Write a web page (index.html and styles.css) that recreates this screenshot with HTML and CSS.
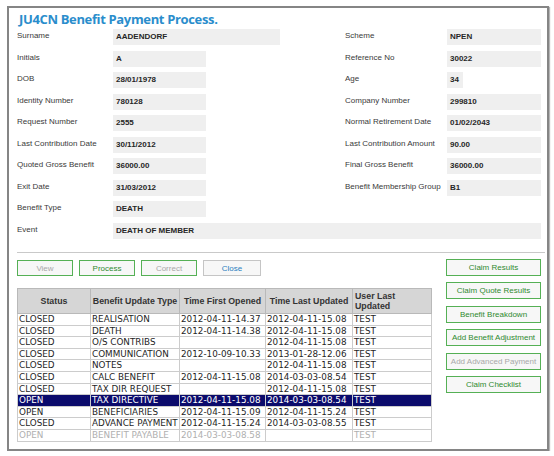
FILE: index.html
```html
<!DOCTYPE html>
<html lang="en">
<head>
    <meta charset="UTF-8">
    <title>Benefit Payment Process</title>
    <link rel="stylesheet" href="styles.css">
</head>
<body>
    <div class="frame">
        <h1 class="title">JU4CN Benefit Payment Process.</h1>

        <div class="form">
            <div class="label">Surname</div>
            <div class="cell"><div class="value w-long">AADENDORF</div></div>
            <div class="label">Scheme</div>
            <div class="cell"><div class="value">NPEN</div></div>

            <div class="label">Initials</div>
            <div class="cell"><div class="value w-short">A</div></div>
            <div class="label">Reference No</div>
            <div class="cell"><div class="value">30022</div></div>

            <div class="label">DOB</div>
            <div class="cell"><div class="value w-short">28/01/1978</div></div>
            <div class="label">Age</div>
            <div class="cell"><div class="value w-tiny">34</div></div>

            <div class="label">Identity Number</div>
            <div class="cell"><div class="value w-short">780128</div></div>
            <div class="label">Company Number</div>
            <div class="cell"><div class="value">299810</div></div>

            <div class="label">Request Number</div>
            <div class="cell"><div class="value w-short">2555</div></div>
            <div class="label">Normal Retirement Date</div>
            <div class="cell"><div class="value">01/02/2043</div></div>

            <div class="label">Last Contribution Date</div>
            <div class="cell"><div class="value w-short">30/11/2012</div></div>
            <div class="label">Last Contribution Amount</div>
            <div class="cell"><div class="value">90.00</div></div>

            <div class="label">Quoted Gross Benefit</div>
            <div class="cell"><div class="value w-short">36000.00</div></div>
            <div class="label">Final Gross Benefit</div>
            <div class="cell"><div class="value">36000.00</div></div>

            <div class="label">Exit Date</div>
            <div class="cell"><div class="value w-short">31/03/2012</div></div>
            <div class="label">Benefit Membership Group</div>
            <div class="cell"><div class="value">B1</div></div>

            <div class="label">Benefit Type</div>
            <div class="cell"><div class="value w-short">DEATH</div></div>
            <div></div>
            <div></div>

            <div class="label">Event</div>
            <div class="cell span3"><div class="value">DEATH OF MEMBER</div></div>
        </div>

        <div class="divider"></div>

        <div class="bottom">
            <div class="left">
                <div class="actions">
                    <button class="btn disabled">View</button>
                    <button class="btn green">Process</button>
                    <button class="btn disabled">Correct</button>
                    <button class="btn close">Close</button>
                </div>

                <table class="grid">
                    <colgroup>
                        <col style="width:73px">
                        <col style="width:89px">
                        <col style="width:86px">
                        <col style="width:87px">
                        <col style="width:79px">
                    </colgroup>
                    <thead>
                        <tr>
                            <th>Status</th>
                            <th>Benefit Update Type</th>
                            <th>Time First Opened</th>
                            <th>Time Last Updated</th>
                            <th class="left-head">User Last Updated</th>
                        </tr>
                    </thead>
                    <tbody>
                        <tr><td>CLOSED</td><td>REALISATION</td><td>2012-04-11-14.37</td><td>2012-04-11-15.08</td><td>TEST</td></tr>
                        <tr><td>CLOSED</td><td>DEATH</td><td>2012-04-11-14.38</td><td>2012-04-11-15.08</td><td>TEST</td></tr>
                        <tr><td>CLOSED</td><td>O/S CONTRIBS</td><td></td><td>2012-04-11-15.08</td><td>TEST</td></tr>
                        <tr><td>CLOSED</td><td>COMMUNICATION</td><td>2012-10-09-10.33</td><td>2013-01-28-12.06</td><td>TEST</td></tr>
                        <tr><td>CLOSED</td><td>NOTES</td><td></td><td>2012-04-11-15.08</td><td>TEST</td></tr>
                        <tr><td>CLOSED</td><td>CALC BENEFIT</td><td>2012-04-11-15.08</td><td>2014-03-03-08.54</td><td>TEST</td></tr>
                        <tr><td>CLOSED</td><td>TAX DIR REQUEST</td><td></td><td>2012-04-11-15.08</td><td>TEST</td></tr>
                        <tr class="selected"><td>OPEN</td><td>TAX DIRECTIVE</td><td>2012-04-11-15.08</td><td>2014-03-03-08.54</td><td>TEST</td></tr>
                        <tr><td>OPEN</td><td>BENEFICIARIES</td><td>2012-04-11-15.09</td><td>2012-04-11-15.24</td><td>TEST</td></tr>
                        <tr><td>CLOSED</td><td>ADVANCE PAYMENT</td><td>2012-04-11-15.24</td><td>2014-03-03-08.55</td><td>TEST</td></tr>
                        <tr class="inactive"><td>OPEN</td><td>BENEFIT PAYABLE</td><td>2014-03-03-08.58</td><td></td><td>TEST</td></tr>
                    </tbody>
                </table>
            </div>

            <div class="side">
                <button class="btn side-btn green">Claim Results</button>
                <button class="btn side-btn green">Claim Quote Results</button>
                <button class="btn side-btn green">Benefit Breakdown</button>
                <button class="btn side-btn green">Add Benefit Adjustment</button>
                <button class="btn side-btn disabled">Add Advanced Payment</button>
                <button class="btn side-btn green">Claim Checklist</button>
            </div>
        </div>
    </div>
</body>
</html>
```

FILE: styles.css
```css
body {
    margin: 0;
    background: #ffffff;
    font-family: "Liberation Sans", Arial, sans-serif;
    color: #333333;
}

.frame {
    margin: 6px 0 0 7px;
    width: 538px;
    height: 441px;
    border: 2px solid #858585;
    box-shadow: 1px 1px 1px #b5b5b5;
    overflow: hidden;
}

.title {
    margin: 2px 0 0 10px;
    font-family: "Open Sans", sans-serif;
    font-weight: 700;
    font-size: 13px;
    line-height: 19px;
    height: 19px;
    color: #2a8dcc;
    letter-spacing: -0.35px;
}

/* form fields: label / value / label / value */
.form {
    margin-left: 8px;
    display: grid;
    grid-template-columns: 96px 232px 102px 94px;
    grid-auto-rows: 15.5px;
    row-gap: 6px;
}

.label {
    font-size: 8px;
    line-height: 13px;
    color: #3a3a3a;
    white-space: nowrap;
}

.value {
    background: #efefef;
    height: 16px;
    line-height: 16px;
    padding-left: 3px;
    font-size: 8px;
    font-weight: bold;
    color: #262626;
    white-space: nowrap;
    box-sizing: border-box;
}

.w-long { width: 167px; }
.w-short { width: 93px; }
.w-tiny { width: 16px; }

.span3 {
    grid-column: 2 / 5;
}

.divider {
    margin: 14px 2px 0 8px;
    height: 1px;
    background: #c9c9c9;
}

.bottom {
    display: flex;
    justify-content: space-between;
    padding: 0 6px 0 8px;
}

.actions {
    display: flex;
    gap: 6px;
    margin-top: 7px;
}

.btn {
    height: 16px;
    width: 56px;
    padding: 0;
    background: #f7f7f7;
    border: 1px solid #55b055;
    font-family: "Liberation Sans", Arial, sans-serif;
    font-size: 8px;
    color: #2f8a2f;
    box-sizing: border-box;
}

.btn.disabled {
    color: #a8a8a8;
}

.btn.close {
    border-color: #c5c5c5;
    color: #2a7fc0;
    width: 58px;
}

/* status table */
.grid {
    margin-top: 12px;
    border-collapse: collapse;
    table-layout: fixed;
    width: 414px;
    border: 1px solid #b9b9b9;
    font-family: "DejaVu Sans", Verdana, sans-serif;
    font-size: 8.8px;
    color: #1f1f1f;
}

.grid th {
    background: #d6d6d6;
    height: 24px;
    padding: 0;
    font-family: "Liberation Sans", Arial, sans-serif;
    font-weight: bold;
    font-size: 8.8px;
    line-height: 10px;
    color: #333333;
    border: 1px solid #b9b9b9;
    text-align: center;
    white-space: nowrap;
}

.grid th.left-head {
    text-align: left;
    white-space: normal;
    padding-left: 2px;
}

.grid td {
    height: 10.6px;
    line-height: 10.6px;
    padding: 0 0 0 1px;
    border: 1px solid #cccccc;
    background: #ffffff;
    white-space: nowrap;
    overflow: hidden;
}

.grid tr.selected td {
    background: #0b0b6c;
    color: #ffffff;
}

.grid tr.inactive td {
    color: #b0b0b0;
}

.side {
    display: flex;
    flex-direction: column;
    gap: 6.4px;
    margin-top: 6px;
}

.side-btn {
    width: 95px;
    height: 17px;
}
```
